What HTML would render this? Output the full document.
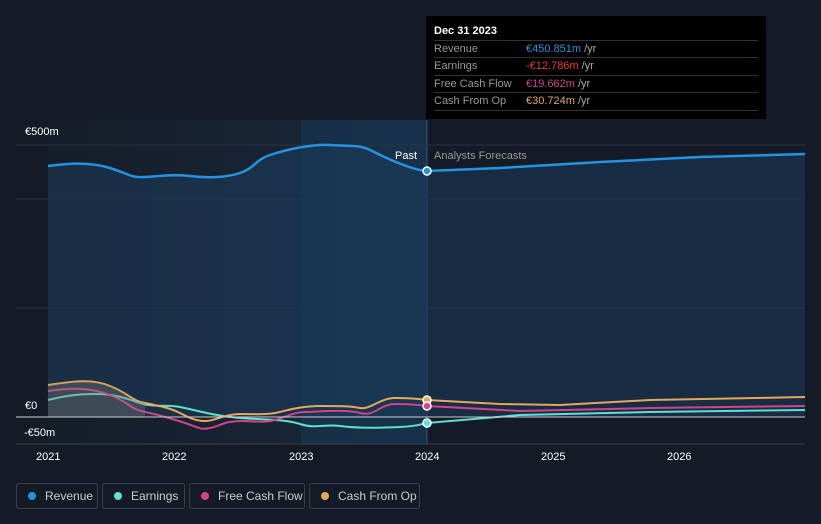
<!DOCTYPE html>
<html><head><meta charset="utf-8"><style>
body{margin:0;width:821px;height:524px;background:#151b26;font-family:"Liberation Sans",sans-serif;overflow:hidden;position:relative}
.tt{position:absolute;left:426px;top:16px;width:340px;height:103px;background:#000;color:#fff;font-size:11px}
.tt .h{position:absolute;left:8px;top:9px;font-weight:bold}
.row{position:absolute;left:8px;width:324px;border-top:1px solid #333;height:17px;line-height:17px;color:#999}
.row span{position:absolute;left:92px}
.row i{font-style:normal;color:#aaa}
.lg{position:absolute;top:483px;height:26px;border:1px solid #3a404a;border-radius:3px;color:#ccc;font-size:12px;line-height:24px;box-sizing:border-box}
.lg b{position:absolute;left:11px;top:8px;width:8px;height:8px;border-radius:50%}
.lg span{position:absolute;left:28px}
.ax{position:absolute;color:#fff;font-size:11px}
</style></head><body>
<svg width="821" height="524" style="position:absolute;left:0;top:0">
<defs>
<linearGradient id="pg" x1="0" x2="1"><stop offset="0" stop-color="#1a2a3c" stop-opacity=".3"/><stop offset="1" stop-color="#1b3550"/></linearGradient>
</defs>
<rect x="48" y="120" width="379" height="324" fill="url(#pg)" opacity=".6"/>
<rect x="301" y="120" width="126" height="324" fill="#173450" opacity=".7"/>
<line x1="427" y1="120" x2="427" y2="444" stroke="#2b5a80"/>
<line x1="16" y1="145" x2="805" y2="145" stroke="#2a3240"/>
<line x1="16" y1="199" x2="805" y2="199" stroke="#2a3240"/>
<line x1="16" y1="308" x2="805" y2="308" stroke="#2a3240"/>
<path d="M48,166 C70,163 90,162 110,168 S130,178 145,177 S175,174 190,176 S225,178 240,173 S255,160 270,155 S310,144 330,145 S360,145 370,150 S410,170 427,171 L500,168 L600,162 L700,157 L805,154 L805,417 L48,417Z" fill="#1a3a58" opacity=".6"/>
<path d="M48,166 C70,163 90,162 110,168 S130,178 145,177 S175,174 190,176 S225,178 240,173 S255,160 270,155 S310,144 330,145 S360,145 370,150 S410,170 427,171 L500,168 L600,162 L700,157 L805,154" fill="none" stroke="#2394df" stroke-width="2.5"/>
<path d="M48,400 C65,396 75,394 95,394 S125,398 140,403 S165,404 180,407 S215,416 240,418 S285,419 300,424 S325,424 340,426 S380,428 400,427 S420,424 427,423 L520,415 L650,412 L805,410" fill="none" stroke="#5fe0d0" stroke-width="2"/>
<path d="M48,391 C70,388 90,387 110,395 S130,409 145,412 S170,418 185,423 S200,430 210,428 S225,421 240,421 S265,423 275,420 S295,412 305,412 S345,409 360,413 S380,404 395,404 S420,405 427,406 L520,411 L650,408 L805,406" fill="none" stroke="#d0448a" stroke-width="2"/>
<path d="M48,385 C70,382 90,378 110,386 S130,400 145,403 S170,408 180,413 S195,421 205,421 S225,414 240,414 S265,415 275,413 S300,406 320,406 S350,406 360,408 S380,398 395,398 S420,399 427,400 L500,404 L560,405 L650,400 L805,397" fill="none" stroke="#e8a85a" stroke-width="2"/>
<path d="M48,385 C70,382 90,378 110,386 S130,400 145,403 L145,417 L48,417Z" fill="#8a7d78" opacity=".35"/>
<line x1="16" y1="417" x2="805" y2="417" stroke="#ccc" stroke-width="1"/>
<line x1="16" y1="444" x2="805" y2="444" stroke="#3a404a"/>
<circle cx="427" cy="171" r="4" fill="#2394df" stroke="#fff" stroke-width="1.5"/>
<circle cx="427" cy="400" r="4" fill="#e8a85a" stroke="#fff" stroke-width="1.5"/>
<circle cx="427" cy="406" r="4" fill="#d0448a" stroke="#fff" stroke-width="1.5"/>
<circle cx="427" cy="423" r="4" fill="#5fe0d0" stroke="#fff" stroke-width="1.5"/>
</svg>
<div class="ax" style="left:25px;top:126px">€500m</div>
<div class="ax" style="left:25px;top:400px">€0</div>
<div class="ax" style="left:24px;top:427px">-€50m</div>
<div class="ax" style="left:395px;top:150px">Past</div>
<div class="ax" style="left:434px;top:150px;color:#999">Analysts Forecasts</div>
<div class="ax" style="left:36px;top:451px">2021</div>
<div class="ax" style="left:162px;top:451px">2022</div>
<div class="ax" style="left:289px;top:451px">2023</div>
<div class="ax" style="left:415px;top:451px">2024</div>
<div class="ax" style="left:541px;top:451px">2025</div>
<div class="ax" style="left:667px;top:451px">2026</div>
<div class="tt"><div class="h">Dec 31 2023</div>
<div class="row" style="top:24px">Revenue<span><em style="font-style:normal;color:#2394df">€450.851m</em> <i>/yr</i></span></div>
<div class="row" style="top:41px">Earnings<span><em style="font-style:normal;color:#f03a3a">-€12.786m</em> <i>/yr</i></span></div>
<div class="row" style="top:59px">Free Cash Flow<span><em style="font-style:normal;color:#d0448a">€19.662m</em> <i>/yr</i></span></div>
<div class="row" style="top:76px">Cash From Op<span><em style="font-style:normal;color:#e8a85a">€30.724m</em> <i>/yr</i></span></div>
<div class="row" style="top:94px;height:0"></div>
</div>
<div class="lg" style="left:16px;width:82px"><b style="background:#2394df"></b><span>Revenue</span></div>
<div class="lg" style="left:102px;width:83px"><b style="background:#5fe0d0"></b><span>Earnings</span></div>
<div class="lg" style="left:189px;width:116px"><b style="background:#d0448a"></b><span>Free Cash Flow</span></div>
<div class="lg" style="left:309px;width:111px"><b style="background:#e8a85a"></b><span>Cash From Op</span></div>
</body></html>
